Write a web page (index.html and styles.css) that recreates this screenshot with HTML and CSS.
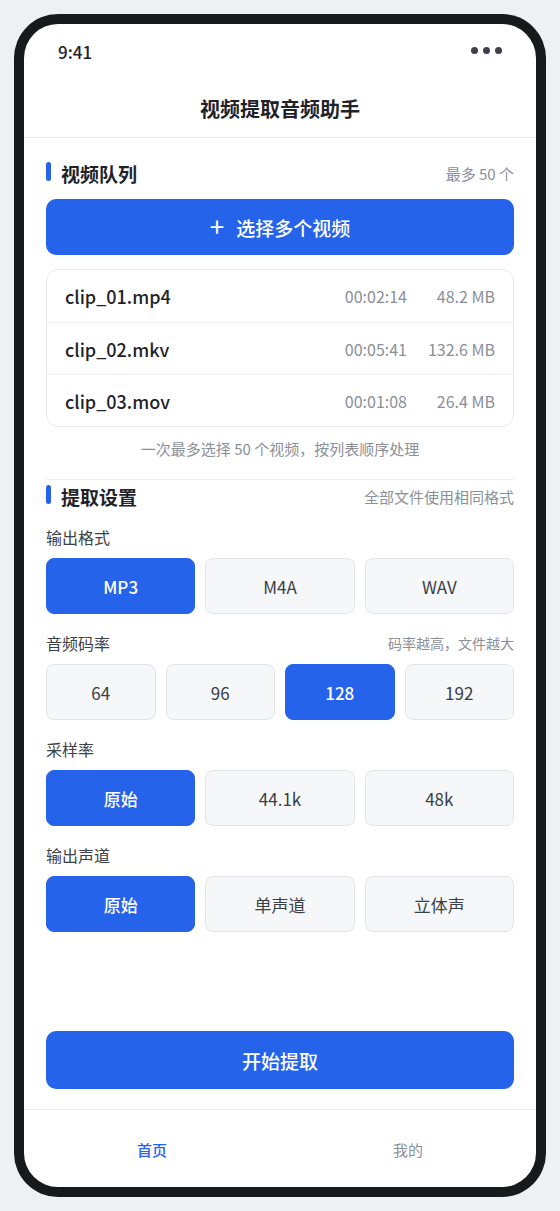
FILE: index.html
```html
<!DOCTYPE html>
<html lang="zh-CN">
<head>
<meta charset="utf-8">
<title>视频提取音频助手</title>
<link rel="stylesheet" href="styles.css">
</head>
<body>
<div class="phone">
  <div class="screen">
    <div class="status">
      <span class="time">9:41</span>
      <span class="dots"><i></i><i></i><i></i></span>
    </div>
    <div class="header">视频提取音频助手</div>
    <div class="content">
      <div class="sec-head first">
        <div class="sec-title"><span class="bar"></span>视频队列</div>
        <div class="sec-note">最多 50 个</div>
      </div>
      <button class="btn-primary pick"><span class="plus">+</span>选择多个视频</button>
      <div class="file-list">
        <div class="file-row"><span class="fname">clip_01.mp4</span><span class="fdur">00:02:14</span><span class="fsize">48.2 MB</span></div>
        <div class="file-row"><span class="fname">clip_02.mkv</span><span class="fdur">00:05:41</span><span class="fsize">132.6 MB</span></div>
        <div class="file-row"><span class="fname">clip_03.mov</span><span class="fdur">00:01:08</span><span class="fsize">26.4 MB</span></div>
      </div>
      <div class="caption">一次最多选择 50 个视频，按列表顺序处理</div>
      <div class="divider"></div>
      <div class="sec-head second">
        <div class="sec-title"><span class="bar"></span>提取设置</div>
        <div class="sec-note">全部文件使用相同格式</div>
      </div>

      <div class="group">
        <div class="label-row"><span class="label">输出格式</span></div>
        <div class="opts cols3">
          <div class="opt on">MP3</div><div class="opt">M4A</div><div class="opt">WAV</div>
        </div>
      </div>
      <div class="group">
        <div class="label-row"><span class="label">音频码率</span><span class="hint">码率越高，文件越大</span></div>
        <div class="opts cols4">
          <div class="opt">64</div><div class="opt">96</div><div class="opt on">128</div><div class="opt">192</div>
        </div>
      </div>
      <div class="group">
        <div class="label-row"><span class="label">采样率</span></div>
        <div class="opts cols3">
          <div class="opt on">原始</div><div class="opt">44.1k</div><div class="opt">48k</div>
        </div>
      </div>
      <div class="group">
        <div class="label-row"><span class="label">输出声道</span></div>
        <div class="opts cols3">
          <div class="opt on">原始</div><div class="opt">单声道</div><div class="opt">立体声</div>
        </div>
      </div>

      <button class="btn-primary start">开始提取</button>
    </div>
    <div class="nav">
      <div class="tab active">首页</div>
      <div class="tab">我的</div>
    </div>
  </div>
</div>
</body>
</html>
```

FILE: styles.css
```css
* { box-sizing: border-box; }
html, body { margin: 0; padding: 0; }
body {
  background: #eef0f4;
  padding: 14px;
  font-family: "Noto Sans CJK SC", "Noto Sans", sans-serif;
  color: #1f2329;
}
.phone {
  width: 532px;
  height: 1183px;
  background: #18191c;
  border-radius: 44px;
  padding: 10px;
}
.screen {
  width: 512px;
  height: 1163px;
  background: #fff;
  border-radius: 34px;
  overflow: hidden;
  display: flex;
  flex-direction: column;
}
.status {
  height: 56px;
  flex: none;
  display: flex;
  align-items: center;
  justify-content: space-between;
  padding: 0 34px 0 34px;
}
.time {
  font-size: 17px;
  font-weight: 500;
  color: #1f2329;
  margin-top: -2px;
}
.dots { display: flex; gap: 5px; margin-top: -4px; }
.dots i {
  display: block;
  width: 7px; height: 7px;
  border-radius: 50%;
  background: #3d4047;
}
.header {
  height: 58px;
  flex: none;
  border-bottom: 1px solid #ebedf0;
  display: flex;
  align-items: center;
  justify-content: center;
  font-size: 20px;
  font-weight: 700;
  color: #1f2329;
}
.content {
  flex: 1;
  display: flex;
  flex-direction: column;
  padding: 0 22px 20px;
}
.sec-head {
  height: 24px;
  display: flex;
  align-items: center;
  justify-content: space-between;
}
.sec-head.first { margin-top: 23px; }
.sec-head.second { margin-top: 4px; }
.sec-title {
  display: flex;
  align-items: center;
  font-size: 19px;
  font-weight: 700;
  color: #1f2329;
}
.bar {
  width: 5px;
  height: 19px;
  border-radius: 3px;
  background: #2563eb;
  margin-right: 10px;
  margin-top: -3px;
}
.sec-note {
  font-size: 15px;
  color: #8a8f99;
}
.btn-primary {
  border: none;
  background: #2563eb;
  color: #fff;
  font-family: inherit;
  font-weight: 500;
  border-radius: 10px;
  display: flex;
  align-items: center;
  justify-content: center;
  width: 100%;
}
.pick {
  margin-top: 14px;
  height: 56px;
  font-size: 19px;
}
.plus {
  font-size: 26px;
  font-weight: 400;
  margin-right: 12px;
  margin-top: -4px;
}
.file-list {
  margin-top: 14px;
  border: 1px solid #e6e8eb;
  border-radius: 12px;
}
.file-row {
  height: 52px;
  display: flex;
  align-items: center;
  padding: 0 18px;
  border-top: 1px solid #eef0f2;
}
.file-row:first-child { border-top: none; height: 52px; }
.fname {
  flex: 1;
  font-size: 18px;
  font-weight: 500;
  color: #1f2329;
}
.fdur, .fsize {
  font-size: 16px;
  color: #8a8f99;
}
.fsize {
  width: 88px;
  text-align: right;
}
.caption {
  margin-top: 11px;
  text-align: center;
  font-size: 15px;
  line-height: 22px;
  color: #8a8f99;
}
.divider {
  margin-top: 19px;
  height: 1px;
  background: #ebedf0;
}
.group { margin-top: 18px; }
.label-row {
  height: 22px;
  display: flex;
  align-items: center;
  justify-content: space-between;
}
.label {
  font-size: 16px;
  color: #3d4148;
}
.hint {
  font-size: 14px;
  color: #8a8f99;
}
.opts {
  margin-top: 10px;
  display: grid;
  gap: 10px;
}
.cols3 { grid-template-columns: repeat(3, 1fr); }
.cols4 { grid-template-columns: repeat(4, 1fr); }
.opt {
  height: 56px;
  border: 1px solid #e3e5e9;
  background: #f6f7f9;
  border-radius: 8px;
  display: flex;
  align-items: center;
  justify-content: center;
  font-size: 17px;
  color: #3a3e45;
}
.opt.on {
  background: #2563eb;
  border-color: #2563eb;
  color: #fff;
  font-weight: 500;
}
.start {
  margin-top: auto;
  height: 58px;
  font-size: 19px;
}
.nav {
  height: 78px;
  flex: none;
  border-top: 1px solid #ebedf0;
  display: flex;
}
.tab {
  flex: 1;
  display: flex;
  align-items: center;
  justify-content: center;
  font-size: 15px;
  color: #8a8f99;
  padding-top: 2px;
}
.tab.active {
  color: #2563eb;
  font-weight: 500;
}
```
